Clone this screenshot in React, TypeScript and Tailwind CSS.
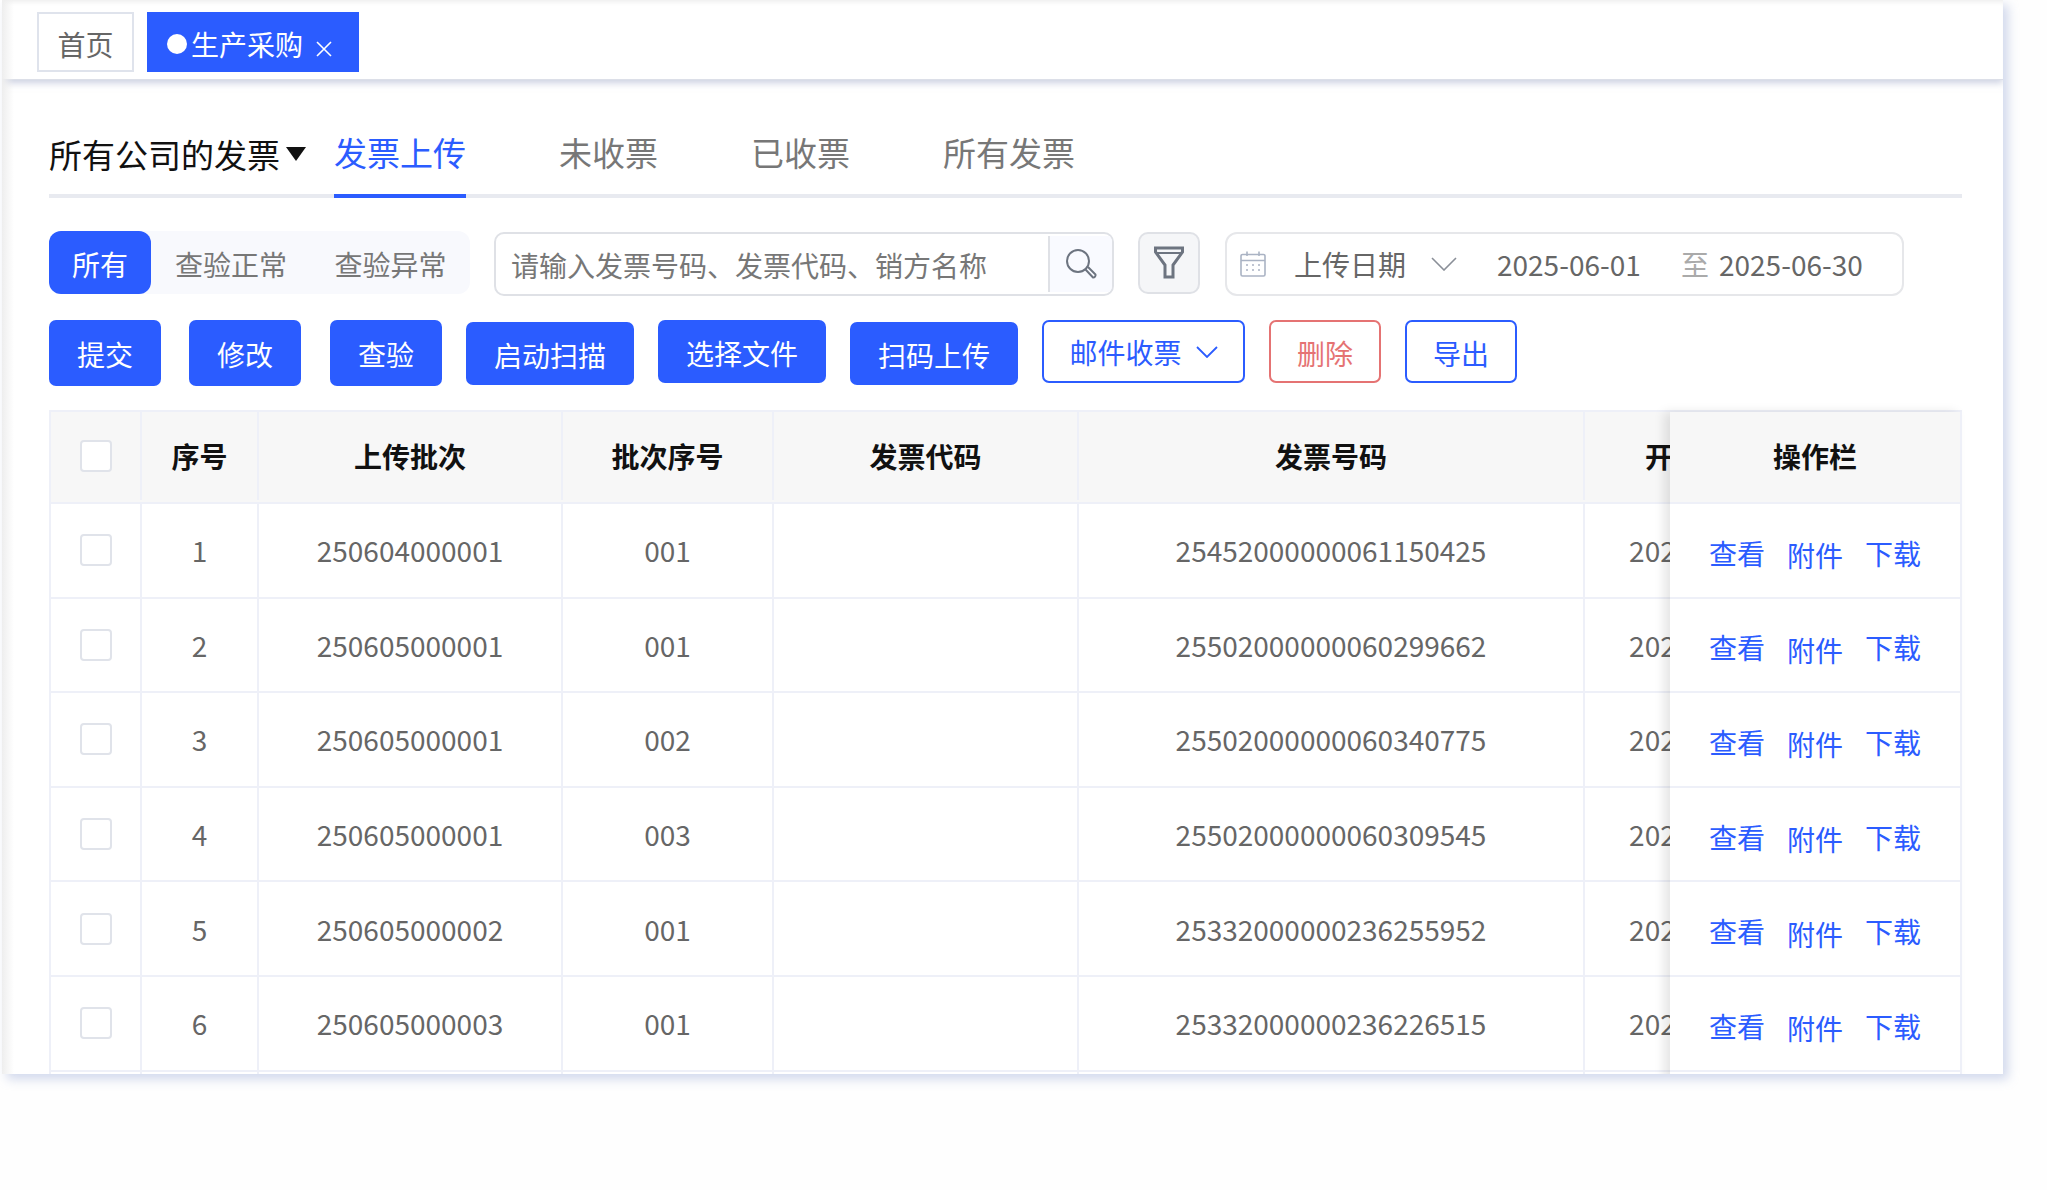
import React from "react";

const FONT = '"Noto Sans CJK SC", "Noto Sans", sans-serif';

const rows = [
  ["1", "250604000001", "001", "", "25452000000061150425", "2025-06-04"],
  ["2", "250605000001", "001", "", "25502000000060299662", "2025-06-05"],
  ["3", "250605000001", "002", "", "25502000000060340775", "2025-06-05"],
  ["4", "250605000001", "003", "", "25502000000060309545", "2025-06-05"],
  ["5", "250605000002", "001", "", "25332000000236255952", "2025-06-05"],
  ["6", "250605000003", "001", "", "25332000000236226515", "2025-06-05"],
  ["", "", "", "", "", ""],
];

const GRID = "grid grid-cols-[91px_117px_304px_211px_305px_506px_234px] w-[1768px]";
const CELL = "flex items-center justify-center border-r-2 border-[#eef0f8] whitespace-nowrap";

function Checkbox() {
  return <span className="block w-[32px] h-[32px] rounded-[4px] border-2 border-[#e0e3ea] bg-white" />;
}

function Solid({ children, className = "" }: { children: React.ReactNode; className?: string }) {
  return (
    <button className={`flex items-center justify-center pt-[2px] rounded-[7px] bg-[#2b5cff] text-white text-[28px] leading-none ${className}`}>
      {children}
    </button>
  );
}

export default function App() {
  const head = ["序号", "上传批次", "批次序号", "发票代码", "发票号码", "开票日期"];
  return (
    <div className="w-[2047px] h-[1190px] bg-[#fefefe] pl-[2px] overflow-hidden" style={{ fontFamily: FONT }}>
      <div className="relative w-[2001px] h-[1074px] overflow-hidden bg-white shadow-[5px_5px_10px_rgba(190,200,228,0.7)]">
        <div className="h-[80px] flex items-start pt-[12px] pl-[35px] gap-[13px] bg-white border-b border-[#dcdfe8] shadow-[0_3px_7px_rgba(160,170,200,0.55),inset_0_5px_5px_-3px_rgba(0,0,0,0.07)]">
          <div className="w-[97px] h-[60px] border-2 border-[#dfe3ec] flex items-center justify-center pt-[3px] text-[28px] text-[#666666] leading-none">首页</div>
          <div className="w-[212px] h-[60px] bg-[#2b5cff] flex items-center pl-[20px] pt-[3px] text-white text-[28px] leading-none">
            <span className="w-[20px] h-[20px] rounded-full bg-white mr-[4px]" />
            <span>生产采购</span>
            <svg className="ml-[12px] mt-[10px]" width="18" height="18" viewBox="0 0 18 18" fill="none" stroke="white" strokeWidth="1.6">
              <path d="M2 2 16 16M16 2 2 16" />
            </svg>
          </div>
        </div>

        <div className="pl-[47px] pr-[41px]">
          <div className="h-[118px] flex items-end border-b-4 border-[#e8eaf0]">
            <div className="flex items-center h-[72px] mb-[4px] text-[33px] text-[#111111] leading-none w-[285px] whitespace-nowrap">
              所有公司的发票
              <svg className="ml-[6px]" width="20" height="14" viewBox="0 0 20 14"><path d="M0 0H20L10 14Z" fill="#111" /></svg>
            </div>
            <div className="w-[132px] h-[76px] -mb-1 border-b-4 border-[#2b5cff] flex items-start justify-center pt-[14px] text-[33px] text-[#2b5cff] leading-none whitespace-nowrap">发票上传</div>
            <div className="flex ml-[93px] gap-[93px] text-[33px] text-[#777777] leading-none h-[76px] pt-[18px] whitespace-nowrap">
              <span>未收票</span>
              <span>已收票</span>
              <span>所有发票</span>
            </div>
          </div>

          <div className="flex items-start mt-[33px] h-[65px]">
            <div className="flex w-[421px] h-[63px] rounded-[12px] bg-[#f8f9fd] text-[28px] leading-none text-[#777777]">
              <div className="w-[102px] h-[63px] pt-[2px] rounded-[12px] bg-[#2b5cff] text-white flex items-center justify-center">所有</div>
              <div className="flex items-center justify-center pt-[2px] w-[160px]">查验正常</div>
              <div className="flex items-center justify-center pt-[2px] w-[159px]">查验异常</div>
            </div>
            <div className="ml-[24px] mt-px w-[620px] h-[64px] rounded-[10px] border-2 border-[#dfe1e6] flex items-center bg-white overflow-hidden">
              <div className="flex-1 pl-[15px] pt-[2px] text-[28px] text-[#777777] leading-none whitespace-nowrap">请输入发票号码、发票代码、销方名称</div>
              <div className="w-[64px] h-[56px] border-l-2 border-[#dfe1e6] bg-[#f9faff] flex items-center justify-center">
                <svg width="32" height="32" viewBox="0 0 32 32" fill="none" stroke="#6d7480" strokeWidth="2">
                  <circle cx="13" cy="13" r="11" />
                  <path d="M20.5 21.5 L28 29.5 A2.4 2.4 0 0 0 30.5 26.5 L23 19" />
                </svg>
              </div>
            </div>
            <div className="ml-[24px] mt-px w-[62px] h-[62px] rounded-[10px] border-2 border-[#dfe1e6] bg-[#f5f6f8] flex items-center justify-center">
              <svg width="30" height="34" viewBox="0 0 30 34" fill="none" stroke="#6d7480" strokeWidth="3">
                <path d="M1.5 2H28.5V6L19 19V31H11V19L1.5 6Z" strokeLinejoin="miter" />
                <path d="M2 7H28" strokeWidth="2" />
              </svg>
            </div>
            <div className="ml-[25px] mt-px w-[679px] h-[64px] rounded-[12px] border-2 border-[#e6e7ea] flex items-center text-[28px] leading-none text-[#666666] whitespace-nowrap bg-white">
              <svg className="ml-[13px]" width="26" height="26" viewBox="0 0 26 26" fill="none" stroke="#aab3c4" strokeWidth="1.6">
                <rect x="1" y="3.5" width="24" height="21.5" rx="1.5" />
                <path d="M1 9.5H25M7 0.5V5M19 0.5V5" />
                <path d="M6 14H9M12 14H15M18 14H21M6 19H9M12 19H15M18 19H21" strokeDasharray="2 1" />
              </svg>
              <span className="ml-[28px] w-[111px]">上传日期</span>
              <svg className="ml-[26px]" width="26" height="14" viewBox="0 0 26 14" fill="none" stroke="#8a8f98" strokeWidth="1.6"><path d="M1 1 13 13 25 1" /></svg>
              <span className="ml-[40px] w-[143px]">2025-06-01</span>
              <span className="ml-[41px] w-[38px] text-[#aaaaaa]">至</span>
              <span>2025-06-30</span>
            </div>
          </div>

          <div className="flex items-start mt-[24px] h-[66px]">
            <Solid className="w-[112px] h-[66px]">提交</Solid>
            <Solid className="ml-[28px] w-[112px] h-[66px]">修改</Solid>
            <Solid className="ml-[29px] w-[112px] h-[66px]">查验</Solid>
            <Solid className="ml-[24px] mt-[2px] w-[168px] h-[63px]">启动扫描</Solid>
            <Solid className="ml-[24px] w-[168px] h-[63px]">选择文件</Solid>
            <Solid className="ml-[24px] mt-[2px] w-[168px] h-[63px]">扫码上传</Solid>
            <button className="ml-[24px] w-[203px] h-[63px] rounded-[7px] border-2 border-[#2b5cff] text-[#2b5cff] text-[28px] leading-none flex items-center justify-center gap-[14px]">
              邮件收票
              <svg width="22" height="12" viewBox="0 0 22 12" fill="none" stroke="#2b5cff" strokeWidth="1.8"><path d="M1 1 11 11 21 1" /></svg>
            </button>
            <button className="ml-[24px] w-[112px] h-[63px] rounded-[7px] border-2 border-[#e57373] text-[#e57373] text-[28px] leading-none pt-[2px] flex items-center justify-center">删除</button>
            <button className="ml-[24px] w-[112px] h-[63px] rounded-[7px] border-2 border-[#2b5cff] text-[#2b5cff] text-[28px] leading-none pt-[2px] flex items-center justify-center">导出</button>
          </div>

          <div className="flex mt-[24px] border-t-2 border-l-2 border-[#eef0f8] text-[28px] leading-none">
            <div className="w-[1619px] overflow-hidden">
              <div className={`${GRID} h-[92px] bg-[#f7f7f7] border-b-2 border-[#eef0f8] font-bold text-[#111111] pb-[2px]`}>
                <div className={CELL}><Checkbox /></div>
                {head.map((h) => (
                  <div key={h} className={CELL}>{h}</div>
                ))}
              </div>
              {rows.map((r, i) => (
                <div key={i} className={`${GRID} h-[94.6px] border-b-2 border-[#eef0f8] text-[#666666]`}>
                  <div className={CELL}>{r[0] && <Checkbox />}</div>
                  {r.map((c, j) => (
                    <div key={j} className={CELL}>{c}</div>
                  ))}
                </div>
              ))}
            </div>
            <div className="w-[292px] shrink-0 bg-white border-r-2 border-[#eef0f8] shadow-[-6px_0_10px_rgba(0,0,0,0.1)] z-10">
              <div className="h-[92px] bg-[#f7f7f7] border-b-2 border-[#eef0f8] font-bold text-[#111111] pb-[2px] flex items-center justify-center">操作栏</div>
              {rows.map((r, i) => (
                <div key={i} className="h-[94.6px] border-b-2 border-[#eef0f8] flex items-center justify-center gap-[22px] pt-[5px] text-[#2b5cff]">
                  {r[0] && (
                    <>
                      <span>查看</span>
                      <span className="mt-[5px]">附件</span>
                      <span>下载</span>
                    </>
                  )}
                </div>
              ))}
            </div>
          </div>
        </div>
        <div className="pointer-events-none absolute inset-y-0 left-0 w-[12px] bg-gradient-to-r from-[#eeeeee] to-transparent" />
      </div>
    </div>
  );
}
